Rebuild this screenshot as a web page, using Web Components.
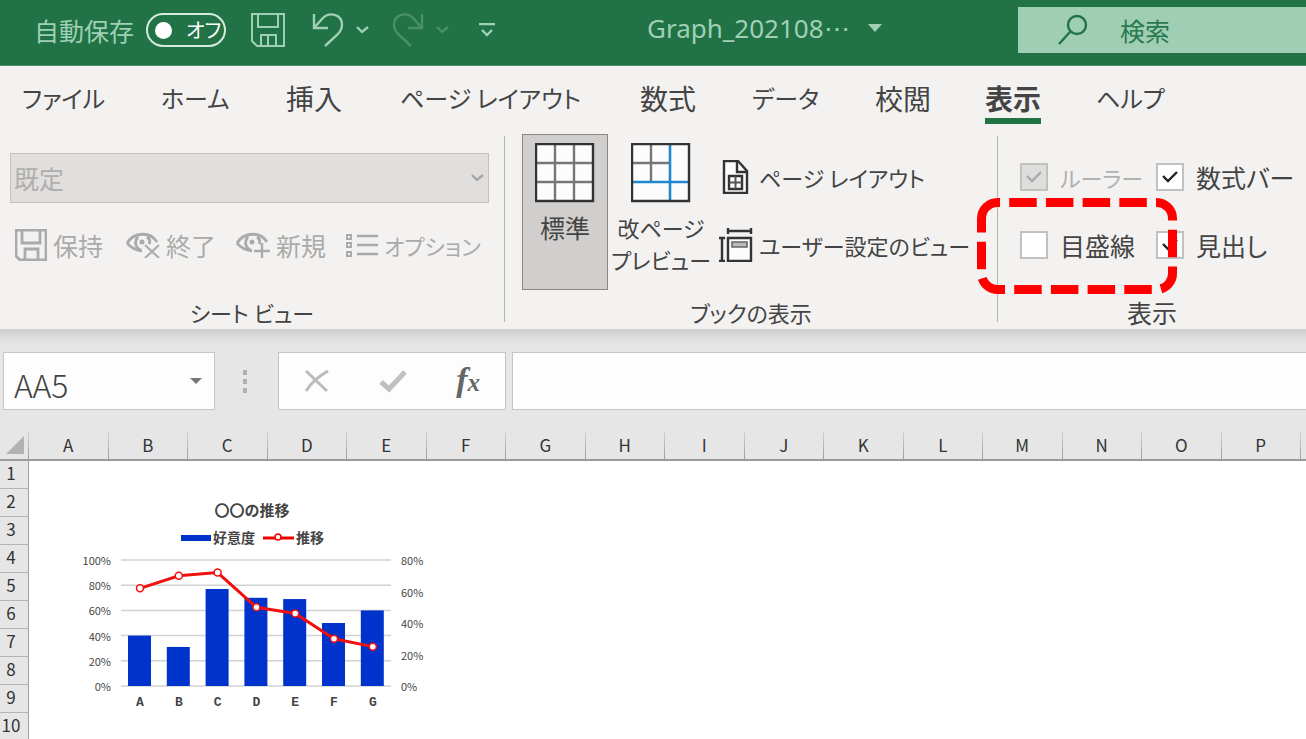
<!DOCTYPE html>
<html lang="ja">
<head>
<meta charset="utf-8">
<title>Graph_202108</title>
<style>
  body {
    margin: 0;
    background: #fff;
    color: #444;
    font-family: "Noto Sans CJK JP", sans-serif;
    font-size: 25px;
    line-height: 32px;
    font-feature-settings: "palt";
    overflow: hidden;
  }
</style>
</head>
<body>
<xl-app></xl-app>

<script>
  // Shared rules for every shadow root
  const base = `
    * { box-sizing: border-box; }
    :host([hidden]) { display: none; }
    button, input, select { font: inherit; font-feature-settings: inherit; color: inherit; margin: 0; padding: 0; border: 0; border-radius: 0; background: none; outline: none; }
    svg { display: block; fill: none; flex: none; }
  `;

  function define(name, html) {
    customElements.define(name, class extends HTMLElement {
      constructor() {
        super();
        this.attachShadow({ mode: 'open' });
      }

      connectedCallback() {
        const markup = typeof html === 'function' ? html(this) : html;
        this.shadowRoot.innerHTML = `<style>${base}</style>${markup}`;
      }
    });
  }

  const floppy = 'M1 1h32v32H6l-5-5zM7 1v13h20V1M10 33V22h15v11M17 22v11';
  const floppyGrey = 'M1 1h30v30H5l-4-4zM7 1v13h18V1M10 31V20h13v11';
  const eye = 'M1 11C8 0 24 -1 31 10M1 11C5 16 9 18 16 19M12 5C8 9 9 16 15 18M21 5c3 2 3 5 2 7';

  const icons = {
    save: [34, 34, `<path d="${floppy}" stroke="currentColor" stroke-width="2"/>`],
    undo: [32, 34, '<path d="M2 1v14h14M2 15L10 6C17-2 30 1 30 12c0 4-2 7-5 10L13 33" stroke="currentColor" stroke-width="2.4"/>'],
    redo: [32, 34, '<path d="M30 1v14H16M30 15L22 6C15-2 2 1 2 12c0 4 2 7 5 10l12 11" stroke="currentColor" stroke-width="2.4"/>'],
    chevron: [13, 8, '<path d="M1 1l5 5 6-5" stroke="currentColor" stroke-width="2.4"/>'],
    customize: [16, 14, '<path d="M0 1h16M3 7l5 5 5-5" stroke="currentColor" stroke-width="2.4"/>'],
    caret: [14, 8, '<path d="M0 0h14L7 8z" fill="currentColor"/>'],
    search: [30, 32, '<circle cx="19" cy="11" r="9" stroke="currentColor" stroke-width="2.4"/><path d="M12 18L1 30" stroke="currentColor" stroke-width="2.4"/>'],
    keep: [32, 32, `<path d="${floppyGrey}" stroke="currentColor" stroke-width="2.8"/>`],
    exit: [34, 26, `<path d="${eye}" stroke="currentColor" stroke-width="2.8"/><circle cx="16" cy="10" r="2.5" fill="currentColor"/><path d="M19 13l14 13M33 13L19 26" stroke="currentColor" stroke-width="2"/>`],
    add: [34, 26, `<path d="${eye}" stroke="currentColor" stroke-width="2.8"/><circle cx="16" cy="10" r="2.5" fill="currentColor"/><path d="M26 11v15M18 19h16" stroke="currentColor" stroke-width="2.4"/>`],
    options: [32, 25, '<path d="M1 2h4v4H1zM1 10h4v4H1zM1 19h4v4H1z" stroke="currentColor" stroke-width="2"/><path d="M11 3h21M11 12h21M11 21h21" stroke="currentColor" stroke-width="2.4"/>'],
    normal: [60, 60, '<path d="M1 1h57v57H1z" fill="#fcfcfc"/><path d="M20 1v57M39 1v57M1 20h57M1 39h57" stroke="#777" stroke-width="2.4"/><path d="M1 1h57v57H1z" stroke="#333" stroke-width="2.4"/>'],
    breaks: [60, 60, '<path d="M1 1h57v57H1z" fill="#fcfcfc"/><path d="M20 1v38M1 20h38" stroke="#777" stroke-width="2.4"/><path d="M39 1v57M1 39h57" stroke="#2088cc" stroke-width="2.6"/><path d="M1 1h57v57H1z" stroke="#333" stroke-width="2.4"/>'],
    page: [34, 34, '<path d="M5 1h14l9 10v22H5z" fill="#fcfcfc" stroke="#333" stroke-width="2.4"/><path d="M18 1v11h10M10 16h13v13H10z" stroke="#333" stroke-width="2.4"/><path d="M16.500 16v13M10 22.500h13" stroke="#555" stroke-width="2"/>'],
    custom: [34, 34, '<path d="M9 10h23v23H9z" fill="#fcfcfc" stroke="#333" stroke-width="2.4"/><path d="M13 14h15v5H13z" fill="#bbb" stroke="#666" stroke-width="1.600"/><path d="M9 3h23M9 0v6M32 0v6M3 10v23M0 10h6M0 33h6" stroke="#333" stroke-width="2.4"/>'],
    cancel: [26, 24, '<path d="M2 2l21 20M24 2C15 7 7 14 2 22" stroke="#bbb" stroke-width="3"/>'],
    enter: [28, 24, '<path d="M2 13l8 7L26 3" stroke="#c0c0c0" stroke-width="5"/>'],
    corner: [18, 18, '<path d="M18 0v18H0z" fill="#b2b2b2"/>']
  };

  define('xl-icon', el => {
    const [w, h, shape] = icons[el.getAttribute('name')];
    return `
      <style>:host { display: block; flex: none; }</style>
      <svg width="${w}" height="${h}" viewBox="0 0 ${w} ${h}" aria-hidden="true">${shape}</svg>`;
  });

  define('xl-title-bar', `
    <style>
      :host {
        display: grid;
        grid-template-columns: 647px 371px 1fr;
        align-items: start;
        height: 66px;
        padding-top: 7px;
        background: #217346;
        border-bottom: 1px solid #4f9470;
        color: #9fd0b5;
      }
      .quick { display: flex; align-items: center; height: 46px; padding-left: 34px; white-space: nowrap; }
      .quick button { display: flex; align-items: center; }
      .switch {
        width: 80px;
        height: 34px;
        margin-left: 12px;
        margin-right: 25px;
        padding-left: 7px;
        gap: 14px;
        border: 2px solid #d5eadf;
        border-radius: 17px;
        color: #fff;
        font-size: 20px;
        line-height: 30px;
      }
      .knob { width: 17px; height: 17px; flex: none; border-radius: 50%; background: #fff; }
      .undo { gap: 12px; margin-left: 27px; }
      .redo { gap: 12px; margin-left: 23px; color: #4a8f6a; }
      .more { margin-left: 30px; }
      .file { display: flex; align-items: center; gap: 18px; height: 42px; font-family: "Noto Sans", sans-serif; font-size: 26px; }
      .search { display: flex; align-items: center; height: 46px; padding-left: 40px; gap: 32px; background: #9fceb4; color: #217346; }
      .search input { flex: 1; min-width: 0; }
      .search input::placeholder { color: #2a7a4f; opacity: 1; }
    </style>
    <div class="quick">
      <span id="auto">自動保存</span>
      <button class="switch" role="switch" aria-checked="false" aria-labelledby="auto"><span class="knob"></span><span>オフ</span></button>
      <button aria-label="上書き保存"><xl-icon name="save"></xl-icon></button>
      <button class="undo" aria-label="元に戻す"><xl-icon name="undo"></xl-icon><xl-icon name="chevron"></xl-icon></button>
      <button class="redo" aria-label="やり直し"><xl-icon name="redo"></xl-icon><xl-icon name="chevron"></xl-icon></button>
      <button class="more" aria-label="カスタマイズ"><xl-icon name="customize"></xl-icon></button>
    </div>
    <button class="file"><span>Graph_202108⋯</span><xl-icon name="caret"></xl-icon></button>
    <label class="search"><xl-icon name="search"></xl-icon><input type="text" placeholder="検索" aria-label="検索"></label>
  `);

  define('xl-tabs', `
    <style>
      :host {
        display: grid;
        grid-template-columns: 139px 125px 114px 240px 112px 123px 110px 111px 1fr;
        padding: 12px 0 4px 22px;
        font-size: 28px;
        line-height: 40px;
        white-space: nowrap;
      }
      ::slotted(a) { justify-self: start; color: inherit; text-decoration: none; border-bottom: 6px solid transparent; }
      ::slotted(a[aria-current]) { font-weight: 700; border-color: #217346; }
      ::slotted(a.kana) { font-size: 24px; }
    </style>
    <slot></slot>
  `);

  define('xl-group', el => `
    <style>
      :host { display: flex; flex-direction: column; height: 186px; border-right: 1px solid #b3b3b2; white-space: nowrap; }
      :host(:last-child) { border: 0; }
      .content { flex: 1; min-height: 0; }
      .title { height: 32px; margin-bottom: -6px; text-align: center; }
      :host([kana]) .title { font-size: 22px; }
    </style>
    <div class="content"><slot></slot></div>
    <div class="title">${el.getAttribute('label')}</div>
  `);

  define('xl-command', el => `
    <style>
      :host { display: block; }
      button { display: flex; align-items: center; gap: 6px; height: 36px; white-space: nowrap; }
      button:disabled { color: #aaa; }
      :host([kana]) button { font-size: 22px; }
      :host([large]) button {
        flex-direction: column;
        width: 86px;
        height: 156px;
        padding-top: 8px;
        gap: 8px;
        border: 1px solid transparent;
      }
      :host([pressed]) button { background: #d0cfce; border-color: #8a8988; }
    </style>
    <button ${el.hasAttribute('disabled') ? 'disabled' : ''}>
      <xl-icon name="${el.getAttribute('icon')}"></xl-icon>
      <span><slot></slot></span>
    </button>
  `);

  define('xl-check', el => `
    <style>
      :host { display: block; position: relative; }
      label { display: flex; align-items: center; gap: 12px; height: 36px; white-space: nowrap; }
      .box { display: grid; }
      input { appearance: none; width: 28px; height: 28px; border: 2px solid #c2c1c0; background: #fff; }
      input, svg { grid-area: 1 / 1; }
      svg { display: none; place-self: center; pointer-events: none; stroke: #222; }
      input:checked + svg { display: block; }
      :host([kana]) label { font-size: 22px; }
      :host([disabled]) label { color: #b0b0b0; }
      :host([disabled]) input { background: #dededd; }
      :host([disabled]) svg { stroke: #aaa; }
    </style>
    <label>
      <span class="box">
        <input type="checkbox" ${el.hasAttribute('checked') ? 'checked' : ''} ${el.hasAttribute('disabled') ? 'disabled' : ''}>
        <svg width="16" height="12" viewBox="0 0 16 12" stroke-width="2.4"><path d="M1 5l5 5 9-9"/></svg>
      </span>
      <span><slot></slot></span>
    </label>
    <slot name="callout"></slot>
  `);

  // Dashed red frame that lies over its neighbours
  define('xl-callout', `
    <style>:host { position: absolute; left: -43px; top: -29px; z-index: 1; pointer-events: none; }</style>
    <svg width="200" height="97" viewBox="0 0 200 97">
      <path d="M4.500 20.500a16 16 0 0 1 16-16h159a16 16 0 0 1 16 16v55a16 16 0 0 1-16 16h-159a16 16 0 0 1-16-16z"
        stroke="#f00" stroke-width="9" stroke-dasharray="27.500 9.200"/>
    </svg>
  `);

  define('xl-ribbon', `
    <style>
      :host { display: block; height: 264px; background: #f3f2f1; border-bottom: 1px solid #cfcfce; }
      .groups { display: grid; grid-template-columns: 505px 493px 1fr; padding-top: 8px; }
      .view { display: flex; flex-direction: column; gap: 24px; padding: 17px 15px 0 10px; }
      .select { display: grid; align-items: center; }
      .select select { appearance: none; height: 50px; padding-left: 3px; border: 1px solid #c3c2c1; background: #e1dfde; color: #b0aeac; opacity: 1; }
      .select > * { grid-area: 1 / 1; }
      .select xl-icon { justify-self: end; margin-right: 5px; color: #a5a5a5; }
      .buttons { display: grid; grid-template-columns: 111px 110px 110px 1fr; padding-left: 5px; }
      .book { display: grid; grid-template-columns: 96px 101px 1fr; padding-left: 17px; margin-top: -2px; }
      .list { display: grid; row-gap: 32px; align-content: start; padding-top: 25px; }
      .show { display: grid; grid-template-columns: 136px 1fr; row-gap: 32px; padding: 23px 0 0 22px; }
    </style>
    <xl-tabs>
      <a href="#" class="kana">ファイル</a>
      <a href="#" class="kana">ホーム</a>
      <a href="#">挿入</a>
      <a href="#" class="kana">ページ レイアウト</a>
      <a href="#">数式</a>
      <a href="#" class="kana">データ</a>
      <a href="#">校閲</a>
      <a href="#" aria-current="page">表示</a>
      <a href="#" class="kana">ヘルプ</a>
    </xl-tabs>
    <div class="groups">
      <xl-group label="シート ビュー" kana>
        <div class="view">
          <div class="select">
            <select disabled aria-label="シート ビュー"><option>既定</option></select>
            <xl-icon name="chevron"></xl-icon>
          </div>
          <div class="buttons">
            <xl-command icon="keep" disabled>保持</xl-command>
            <xl-command icon="exit" disabled>終了</xl-command>
            <xl-command icon="add" disabled>新規</xl-command>
            <xl-command icon="options" disabled kana>オプション</xl-command>
          </div>
        </div>
      </xl-group>
      <xl-group label="ブックの表示" kana>
        <div class="book">
          <xl-command icon="normal" large pressed>標準</xl-command>
          <xl-command icon="breaks" large kana>改ページ<br>プレビュー</xl-command>
          <div class="list">
            <xl-command icon="page" kana>ページ レイアウト</xl-command>
            <xl-command icon="custom" kana>ユーザー設定のビュー</xl-command>
          </div>
        </div>
      </xl-group>
      <xl-group label="表示">
        <div class="show">
          <xl-check checked disabled kana>ルーラー</xl-check>
          <xl-check checked>数式バー</xl-check>
          <xl-check>目盛線<xl-callout slot="callout"></xl-callout></xl-check>
          <xl-check checked>見出し</xl-check>
        </div>
      </xl-group>
    </div>
  `);

  define('xl-formula-bar', `
    <style>
      :host {
        display: grid;
        grid-template-columns: 212px 63px 228px 1fr;
        padding: 22px 0 21px 3px;
        background: linear-gradient(#d0d0d0, #e6e6e6 14px);
      }
      .box { display: flex; align-items: center; height: 58px; border: 1px solid #c6c6c6; background: #fdfdfd; }
      .name input { flex: 1; min-width: 0; padding: 6px 0 0 10px; font-size: 32px; font-weight: 300; line-height: 40px; }
      .name button { padding-right: 12px; color: #777; }
      .dots { display: grid; gap: 4px; place-content: center; padding-right: 4px; }
      .dots i { width: 4px; height: 5px; background: #b0b0b0; }
      .tools { justify-content: space-between; padding: 0 25px; }
      .fx { font: italic 700 34px/40px "Liberation Serif", serif; color: #666; }
      .fx small { font-size: 25px; }
      .formula { margin-left: 6px; border-right: 0; }
      .formula input { flex: 1; min-width: 0; }
    </style>
    <div class="box name"><input type="text" value="AA5" aria-label="名前ボックス"><button aria-label="名前の一覧"><svg width="12" height="6" viewBox="0 0 12 6"><path d="M0 0h12L6 6z" fill="currentColor"/></svg></button></div>
    <div class="dots"><i></i><i></i><i></i></div>
    <div class="box tools">
      <button aria-label="キャンセル"><xl-icon name="cancel"></xl-icon></button>
      <button aria-label="入力"><xl-icon name="enter"></xl-icon></button>
      <button class="fx" aria-label="関数の挿入">f<small>x</small></button>
    </div>
    <div class="box formula"><input type="text" aria-label="数式"></div>
  `);

  const categories = ['A', 'B', 'C', 'D', 'E', 'F', 'G'];
  const liking = [40, 31, 77, 70, 69, 50, 60];
  const trend = [62, 70, 72, 50, 46, 30, 25];

  define('xl-chart', () => {
    const bottom = 191;
    const height = 126;
    const x = i => 60 + i * 38.800;
    const y = (value, max) => bottom - value / max * height;
    const left = [0, 20, 40, 60, 80, 100];
    const right = [0, 20, 40, 60, 80];
    const points = trend.map((v, i) => [x(i), y(v, 80)]);
    return `
      <style>
        :host { display: block; }
        text { fill: #444; font-family: "Noto Sans CJK JP", sans-serif; font-size: 11px; }
        .bold { font-size: 14px; font-weight: 700; text-anchor: middle; }
        .title { font-size: 15px; }
        .cat { font-family: "Liberation Mono", monospace; font-size: 13px; font-weight: 700; text-anchor: middle; }
      </style>
      <svg width="350" height="220" viewBox="0 0 350 220" role="img" aria-label="〇〇の推移">
        <text class="bold title" x="172" y="21">〇〇の推移</text>
        <path d="M101 43h30" stroke="#0033cc" stroke-width="6"/>
        <text class="bold" x="154" y="48">好意度</text>
        <path d="M183 43h31" stroke="#f00000" stroke-width="3"/>
        <circle cx="198" cy="42" r="3" fill="#fff" stroke="#f00000" stroke-width="1.500"/>
        <text class="bold" x="230" y="48">推移</text>
        ${left.map(v => `
          <path d="M41 ${y(v, 100)}h270" stroke="#d2d2d2" stroke-width="1.500"/>
          <text x="31" y="${y(v, 100) + 5}" text-anchor="end">${v}%</text>`).join('')}
        ${right.map(v => `<text x="321" y="${y(v, 80) + 5}">${v}%</text>`).join('')}
        ${liking.map((v, i) => `<rect x="${x(i) - 12}" y="${y(v, 100)}" width="23" height="${bottom - y(v, 100)}" fill="#0033cc"/>`).join('')}
        <polyline points="${points.join(' ')}" stroke="#f01010" stroke-width="3"/>
        ${points.map(p => `<circle cx="${p[0]}" cy="${p[1]}" r="3.500" fill="#fff" stroke="#f01010" stroke-width="1.500"/>`).join('')}
        ${categories.map((c, i) => `<text class="cat" x="${x(i)}" y="211">${c}</text>`).join('')}
      </svg>`;
  });

  define('xl-sheet', () => {
    const columns = 'ABCDEFGHIJKLMNOP'.split('');
    const rows = Array.from({ length: 10 }, (_, i) => i + 1);
    return `
      <style>
        :host { display: block; position: relative; }
        table { width: 100%; table-layout: fixed; border-collapse: separate; border-spacing: 0; font-size: 17px; line-height: 24px; color: #333; }
        th { padding: 0; font-weight: 400; background: #e6e6e6; }
        thead th { height: 30px; border-bottom: 2px solid #9f9f9f; border-right: 1px solid #a8a8a8; border-image: linear-gradient(#d8d8d8, #9a9a9a) 1; }
        thead th:last-child { border-right: 0; }
        tbody th { height: 28px; padding: 0 6px 3px 0; border-right: 1px solid #9f9f9f; border-bottom: 1px solid #b4b4b4; }
        td { padding: 0; }
        .first { width: 29px; }
        .last { width: 5px; }
        thead xl-icon { margin-left: 6px; }
        /* Charts float over the cells */
        xl-chart { position: absolute; left: 80px; top: 64px; }
      </style>
      <table>
        <colgroup><col class="first"><col span="16"><col class="last"></colgroup>
        <thead><tr><th aria-label="すべて選択"><xl-icon name="corner"></xl-icon></th>${columns.map(c => `<th scope="col">${c}</th>`).join('')}<th></th></tr></thead>
        <tbody>${rows.map(r => `<tr><th scope="row">${r}</th><td colspan="17"></td></tr>`).join('')}</tbody>
      </table>
      <xl-chart></xl-chart>`;
  });

  define('xl-app', `
    <style>
      :host { display: flex; flex-direction: column; height: 100vh; overflow: hidden; }
      xl-title-bar, xl-ribbon, xl-formula-bar, xl-sheet { flex: none; }
    </style>
    <xl-title-bar></xl-title-bar>
    <xl-ribbon></xl-ribbon>
    <xl-formula-bar></xl-formula-bar>
    <xl-sheet></xl-sheet>
  `);
</script>
</body>
</html>
